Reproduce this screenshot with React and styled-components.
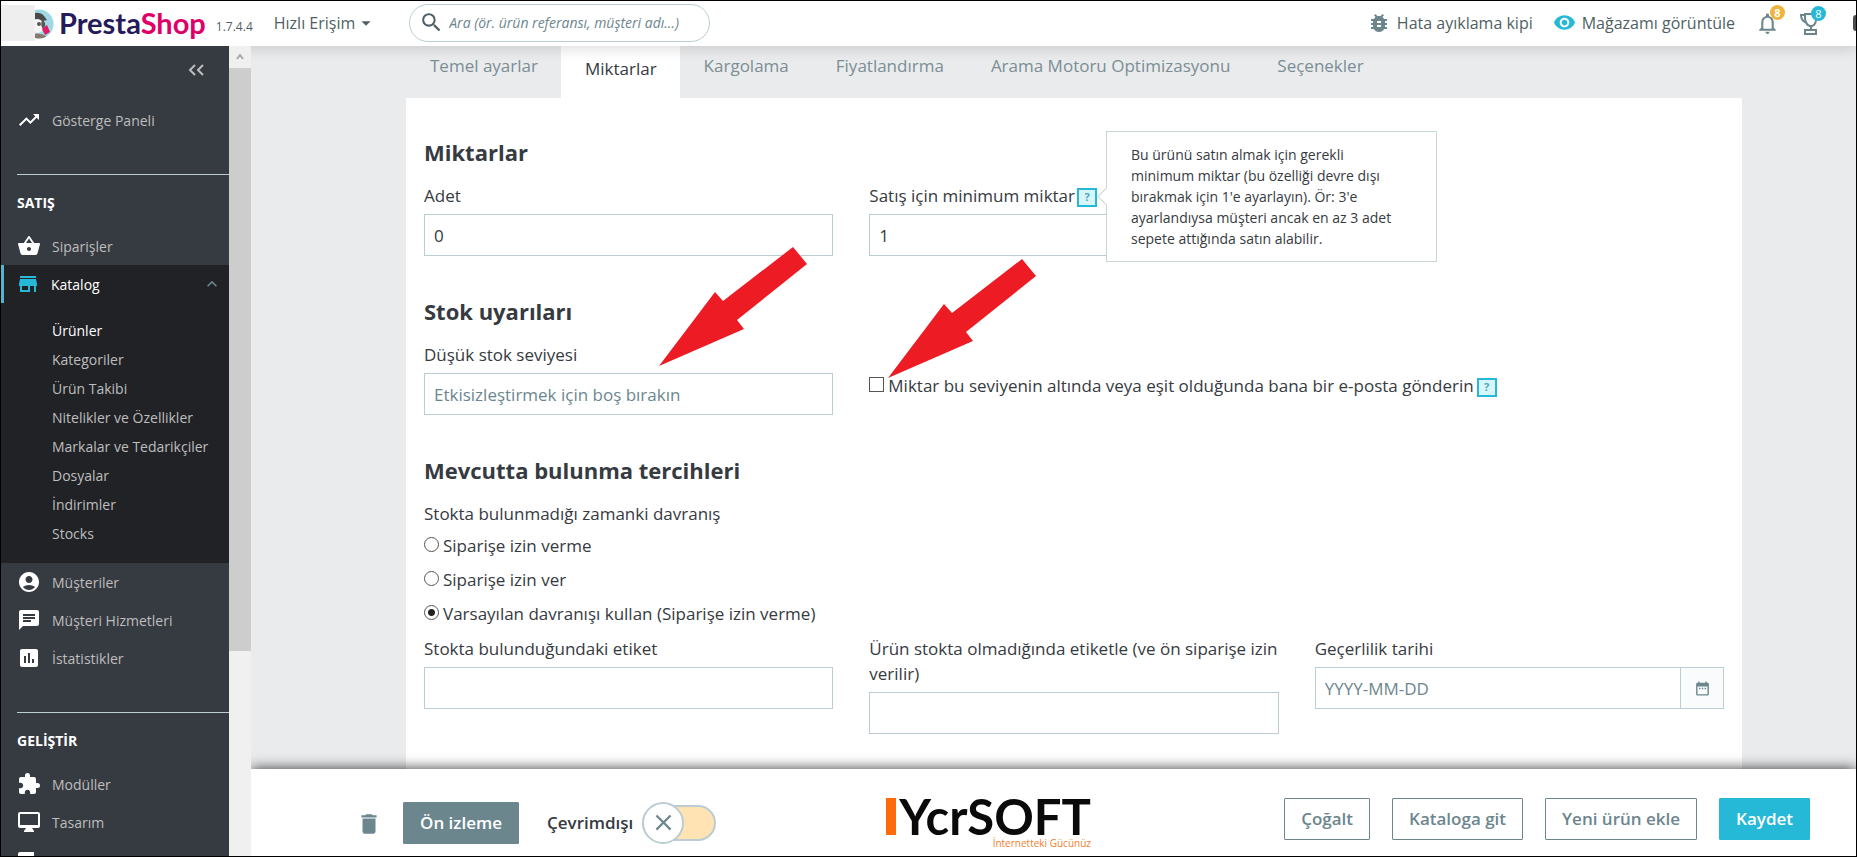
import React from "react";
import styled, { createGlobalStyle } from "styled-components";
import {
  MdTrendingUp,
  MdShoppingBasket,
  MdStore,
  MdAccountCircle,
  MdChat,
  MdAssessment,
  MdExtension,
  MdLocalShipping,
  MdKeyboardArrowUp,
  MdBugReport,
  MdRemoveRedEye,
  MdSearch,
  MdArrowDropDown,
  MdDelete,
  MdClose,
  MdNotificationsNone,
  MdDateRange,
} from "react-icons/md";

const GlobalStyle = createGlobalStyle`
  *, *::before, *::after { box-sizing: border-box; }
  body {
    margin: 0;
    background: #eaebec;
    color: #363a41;
    font-family: "Open Sans", "Noto Sans", sans-serif;
    font-size: 17px;
  }
  button, input { font: inherit; color: inherit; }
  button { cursor: pointer; }
  a { color: inherit; text-decoration: none; }
  svg { display: block; flex: none; }
`;

const Shell = styled.div`
  height: 100vh;
  display: flex;
  flex-direction: column;
  border: 1px solid #000;
  overflow: hidden;
`;

/* ---------- top bar ---------- */

const TopBar = styled.header`
  position: relative;
  z-index: 1;
  flex: none;
  display: flex;
  align-items: center;
  height: 45px;
  padding-bottom: 2px;
  background: #fff;
  color: #4f5f64;
  font-size: 16px;
  white-space: nowrap;
  box-shadow: 0 4px 12px rgba(0, 0, 0, 0.12);
`;

const Brand = styled.a`
  display: flex;
  align-items: center;
  height: 37px;
`;

const BrandName = styled.span`
  margin-left: 5px;
  font-family: "Lato", sans-serif;
  font-size: 29px;
  line-height: 36px;
  font-weight: 700;
  color: #251b5b;
  b { font-weight: 700; color: #df0067; }
`;

const Version = styled.span`
  margin: 8px 0 0 10px;
  font-size: 12px;
  line-height: 16px;
`;

const QuickAccess = styled.button`
  display: flex;
  align-items: center;
  margin-left: 21px;
  padding: 0;
  border: 0;
  background: none;
  line-height: 24px;
`;

const Search = styled.label`
  display: flex;
  align-items: center;
  width: 301px;
  height: 38px;
  margin-left: 32px;
  padding: 0 20px 0 9px;
  border: 1px solid #bbcdd2;
  border-radius: 19px;
  input {
    flex: 1;
    min-width: 0;
    margin-left: 5px;
    padding: 0;
    border: 0;
    outline: 0;
    background: none;
    font-size: 14px;
    font-style: italic;
  }
  input::placeholder { color: #6c868e; opacity: 1; }
`;

const TopActions = styled.div`
  display: flex;
  align-items: center;
  margin-left: auto;
`;

const TopLink = styled.a`
  display: flex;
  align-items: center;
  gap: 6px;
  margin-right: 20px;
  line-height: 24px;
`;

const Notify = styled.button`
  position: relative;
  display: flex;
  padding: 0;
  margin: 2px 19px 0 0;
  border: 0;
  background: none;
  color: #6c868e;
`;

const Badge = styled.span`
  position: absolute;
  top: -6px;
  right: -5px;
  width: 15px;
  height: 15px;
  border-radius: 50%;
  background: ${(p) => p.$color};
  color: #fff;
  font-size: 11px;
  line-height: 15px;
  font-weight: ${(p) => (p.$bold ? 700 : 400)};
  text-align: center;
`;

const Avatar = styled.div`
  width: 3px;
  height: 16px;
  margin-left: 13px;
  border-radius: 3px 0 0 3px;
  background: #4b4b4b;
`;

/* ---------- side navigation ---------- */

const Body = styled.div`
  flex: 1;
  min-height: 0;
  display: flex;
`;

const SideBar = styled.nav`
  position: relative;
  z-index: 2;
  flex: none;
  width: 228px;
  overflow: hidden;
  background: #363a41;
  color: #bebebe;
  font-size: 14px;
`;

const Collapse = styled.button`
  display: block;
  margin: 15px 24px 22px auto;
  padding: 0;
  border: 0;
  background: none;
  color: #bebebe;
`;

const SideGroup = styled.section`
  h3 {
    margin: 35px 0 14px 16px;
    padding-top: 18px;
    border-top: 1px solid #bbcdd2;
    color: #fff;
    font-size: 14px;
    line-height: 20px;
    font-weight: 700;
  }
  ul { margin: 0; padding: 0; list-style: none; }
`;

const SideItem = styled.a`
  display: flex;
  align-items: center;
  gap: 11px;
  height: 38px;
  padding: 0 7px 0 ${(p) => (p.$active ? 12 : 16)}px;
  border-left: ${(p) => (p.$active ? "3px solid #4fb6cf" : "0")};
  background: ${(p) => (p.$active ? "#202226" : "transparent")};
  color: ${(p) => (p.$active ? "#fff" : "inherit")};
  > svg:first-child { color: ${(p) => (p.$active ? "#25b9d7" : "#fff")}; }
  > svg:last-child:not(:first-child) { margin-left: auto; color: #6c868e; }
`;

const SubMenu = styled.div`
  padding: 13px 0 15px 51px;
  background: #202226;
`;

const SubItem = styled.a`
  display: block;
  line-height: 29px;
  color: ${(p) => (p.$active ? "#fff" : "inherit")};
`;

const ScrollTrack = styled.div`
  position: relative;
  z-index: 2;
  flex: none;
  width: 22px;
  background: #f0f0f0;
`;

const ScrollUp = styled.div`
  display: flex;
  justify-content: center;
  align-items: center;
  height: 22px;
  color: #a8a8a8;
`;

const ScrollThumb = styled.div`
  height: 72%;
  background: #cdcdcd;
`;

/* ---------- main area ---------- */

const Main = styled.main`
  flex: 1;
  min-width: 0;
  display: flex;
  flex-direction: column;
`;

const Scroll = styled.div`
  flex: 1;
  min-height: 0;
  display: flex;
  flex-direction: column;
  overflow: hidden;
  padding: 0 114px 0 155px;
  background: #eaebec;
`;

const Tabs = styled.div`
  flex: none;
  display: flex;
  height: 52px;
`;

const Tab = styled.button`
  padding: 0 23px ${(p) => (p.$active ? 8 : 14)}px 24px;
  border: 0;
  background: ${(p) => (p.$active ? "#fff" : "transparent")};
  color: ${(p) => (p.$active ? "#363a41" : "#7b8e94")};
  white-space: nowrap;
`;

const Card = styled.form`
  flex: 1;
  padding: 39px 18px 0;
  background: #fff;
`;

const Heading = styled.h2`
  margin: 0 0 16px;
  font-size: 22px;
  line-height: 30px;
  font-weight: 700;
`;

const Row = styled.div`
  display: grid;
  grid-template-columns: repeat(3, minmax(0, 1fr));
  column-gap: 36px;
  align-items: start;
  margin-bottom: 40px;
`;

const Field = styled.div`
  position: relative;
  grid-column: span ${(p) => p.$span || 1};
`;

const LabelRow = styled.div`
  display: flex;
  align-items: center;
  gap: 2px;
  margin-bottom: 6px;
  line-height: 25px;
`;

const TextInput = styled.input`
  display: block;
  width: 100%;
  height: 42px;
  padding: 0 9px;
  border: 1px solid #bbcdd2;
  border-radius: 0;
  outline: 0;
  background: #fff;
  &::placeholder { color: #6c868e; opacity: 1; }
`;

const DateGroup = styled.div`
  display: flex;
`;

const DateButton = styled.button`
  flex: none;
  display: flex;
  align-items: center;
  justify-content: center;
  width: 43px;
  height: 42px;
  padding: 0;
  border: 1px solid #bbcdd2;
  border-left: 0;
  background: #fafbfc;
  color: #6c868e;
`;

const HelpAnchor = styled.span`
  position: relative;
  display: inline-flex;
`;

const HelpButton = styled.button`
  flex: none;
  width: 20px;
  height: 19px;
  margin-top: 3px;
  padding: 0;
  border: 2px solid #25b9d7;
  background: #d8f5fa;
  color: #4ba7bd;
  font-size: 11px;
  line-height: 14px;
  font-weight: 700;
`;

const Popover = styled.div`
  position: absolute;
  z-index: 1;
  left: 29px;
  top: 50%;
  width: 331px;
  margin-top: -65px;
  padding: 12px 30px 12px 24px;
  border: 1px solid #c9d5d6;
  background: #fff;
  font-size: 14px;
  line-height: 21px;
  &::before {
    content: "";
    position: absolute;
    left: -7px;
    top: 58px;
    width: 13px;
    height: 13px;
    border: solid #c9d5d6;
    border-width: 0 0 1px 1px;
    background: #fff;
    transform: rotate(45deg);
  }
`;

const RadioList = styled.div`
  display: flex;
  flex-direction: column;
  align-items: flex-start;
  gap: 9px;
  margin: 7px 0 10px;
  line-height: 25px;
`;

const Choice = styled.label`
  display: flex;
  align-items: center;
  gap: 4px;
  line-height: 25px;
`;

const Tick = styled.input`
  appearance: none;
  flex: none;
  width: 15px;
  height: 15px;
  margin: 0 0 3px;
  border: 1px solid #555;
  border-radius: ${(p) => (p.type === "radio" ? "50%" : "0")};
  background: #fff;
  &:checked { background: radial-gradient(circle, #222 3px, #fff 4px); }
`;

const EmailRow = styled.div`
  display: flex;
  align-items: center;
  gap: 3px;
  margin-top: 31px;
`;

const Arrow = styled.svg`
  position: absolute;
  z-index: 2;
  left: ${(p) => p.$left}px;
  top: ${(p) => p.$top}px;
  pointer-events: none;
`;

/* ---------- footer ---------- */

const Footer = styled.footer`
  position: relative;
  z-index: 1;
  flex: none;
  display: flex;
  align-items: center;
  height: 87px;
  padding: 0 46px 0 105px;
  background: #fff;
  white-space: nowrap;
  box-shadow: 0 0 13px rgba(0, 0, 0, 0.8);
`;

const IconButton = styled.button`
  padding: 0;
  margin: 2px 21px 0 0;
  border: 0;
  background: none;
  color: #6c868e;
`;

const Button = styled.button`
  height: 42px;
  padding: 0 16px;
  border: 1px solid ${(p) => p.$border || "#6c868e"};
  border-radius: 1px;
  background: ${(p) => p.$fill || "#fff"};
  color: ${(p) => (p.$fill ? "#fff" : "#6c868e")};
  font-weight: 600;
`;

const FooterLeft = styled.div`
  display: flex;
  align-items: center;
  margin-top: 20px;
`;

const FooterRight = styled.div`
  display: flex;
  gap: 22px;
  margin: 12px 0 0 auto;
`;

const Toggle = styled.label`
  display: flex;
  align-items: center;
  gap: 9px;
  margin-left: 28px;
  font-weight: 600;
  input { position: absolute; opacity: 0; width: 0; height: 0; margin: 0; }
`;

const Switch = styled.span`
  display: flex;
  align-items: center;
  width: 74px;
  height: 36px;
  border: 2px solid #bbcdd2;
  border-radius: 18px;
  background: #ffe3b3;
  color: #6c868e;
`;

const Knob = styled.span`
  flex: none;
  display: flex;
  align-items: center;
  justify-content: center;
  width: 42px;
  height: 42px;
  margin-left: -2px;
  border: 2px solid #bbcdd2;
  border-radius: 50%;
  background: #fff;
`;

const Sponsor = styled.div`
  display: grid;
  grid-template-columns: 10px auto;
  column-gap: 3px;
  margin: 22px 0 0 170px;
  font-family: "Lato", sans-serif;
`;

const SponsorBar = styled.span`
  height: 37px;
  background: #ff6a0a;
`;

const SponsorName = styled.span`
  font-size: 49px;
  line-height: 37px;
  font-weight: 700;
  color: #0a0a0a;
`;

const SponsorTag = styled.span`
  grid-column: 1 / -1;
  justify-self: end;
  margin-top: 1px;
  font-family: "Open Sans", sans-serif;
  font-size: 10px;
  line-height: 14px;
  color: #f08030;
`;

function DesktopIcon({ size }) {
  return (
    <svg width={size} height={size} viewBox="0 0 24 24" fill="currentColor" aria-hidden="true">
      <path
        fillRule="evenodd"
        d="M3 2h18a2 2 0 0 1 2 2v12a2 2 0 0 1-2 2h-6l2 3v1H7v-1l2-3H3a2 2 0 0 1-2-2V4a2 2 0 0 1 2-2zM3 4v11h18V4z"
      />
    </svg>
  );
}

const mainNav = [
  { label: "Siparişler", Icon: MdShoppingBasket },
  {
    label: "Katalog",
    Icon: MdStore,
    items: [
      "Ürünler",
      "Kategoriler",
      "Ürün Takibi",
      "Nitelikler ve Özellikler",
      "Markalar ve Tedarikçiler",
      "Dosyalar",
      "İndirimler",
      "Stocks",
    ],
  },
  { label: "Müşteriler", Icon: MdAccountCircle },
  { label: "Müşteri Hizmetleri", Icon: MdChat },
  { label: "İstatistikler", Icon: MdAssessment },
];

const developNav = [
  { label: "Modüller", Icon: MdExtension },
  { label: "Tasarım", Icon: DesktopIcon },
  { label: "Kargo", Icon: MdLocalShipping },
];

const tabs = [
  "Temel ayarlar",
  "Miktarlar",
  "Kargolama",
  "Fiyatlandırma",
  "Arama Motoru Optimizasyonu",
  "Seçenekler",
];

const radios = [
  "Siparişe izin verme",
  "Siparişe izin ver",
  "Varsayılan davranışı kullan (Siparişe izin verme)",
];

function NavGroup({ title, entries }) {
  return (
    <SideGroup>
      <h3>{title}</h3>
      <ul>
        {entries.map(({ label, Icon, items }) => (
          <li key={label}>
            <SideItem href="#" $active={!!items}>
              <Icon size={24} />
              {label}
              {items && <MdKeyboardArrowUp size={20} />}
            </SideItem>
            {items && (
              <SubMenu>
                {items.map((item, i) => (
                  <SubItem key={item} href="#" $active={i === 0}>
                    {item}
                  </SubItem>
                ))}
              </SubMenu>
            )}
          </li>
        ))}
      </ul>
    </SideGroup>
  );
}

function RedArrow({ left, top }) {
  return (
    <Arrow $left={left} $top={top} width="148" height="119" viewBox="0 0 148 119" aria-hidden="true">
      <polygon points="0,119 56,45 64,54 134,0 148,17 78,73 85,82" fill="#ed1c24" />
    </Arrow>
  );
}

function Mascot() {
  return (
    <svg width="53" height="37" viewBox="0 0 53 37" aria-hidden="true">
      <clipPath id="face">
        <circle cx="38" cy="20" r="14.5" />
      </clipPath>
      <g clipPath="url(#face)">
        <rect x="20" y="2" width="34" height="36" fill="#9fd9e4" />
        <path d="M28 11q10-5 15 1l3 4-4 1-14-1z" fill="#4a4a4c" />
        <ellipse cx="36" cy="22" rx="7" ry="7" fill="#f4f4f2" />
        <path d="M41 16q4 2 3 6l-2 3q-3-4-1-9z" fill="#5a5350" />
        <circle cx="38" cy="20" r="2" fill="#555" />
        <path d="M41 25l5-4 3 7-5 3z" fill="#df1a68" />
        <path d="M28 32q9-5 17 0l-2 5H28z" fill="#8b7a6c" />
      </g>
      <rect y="1" width="34" height="36" fill="#eeeeee" />
    </svg>
  );
}

function Trophy() {
  return (
    <svg width="22" height="24" viewBox="0 0 22 24" fill="none" stroke="#6c868e" strokeWidth="2" aria-hidden="true">
      <path d="M6 2h11v5q0 6-4 7h-2q-4-1-5-7z" />
      <path d="M6 3H2q0 6 6 8M12 14v4" />
      <rect x="6" y="18" width="11" height="4" />
    </svg>
  );
}

export default function App() {
  return (
    <>
      <GlobalStyle />
      <Shell>
        <TopBar>
          <Brand href="#">
            <Mascot />
            <BrandName>
              Presta<b>Shop</b>
            </BrandName>
          </Brand>
          <Version>1.7.4.4</Version>
          <QuickAccess type="button">
            Hızlı Erişim <MdArrowDropDown size={22} />
          </QuickAccess>
          <Search>
            <MdSearch size={25} />
            <input type="text" aria-label="Ara" placeholder="Ara (ör. ürün referansı, müşteri adı…)" />
          </Search>
          <TopActions>
            <TopLink href="#">
              <MdBugReport size={24} color="#6c868e" />
              Hata ayıklama kipi
            </TopLink>
            <TopLink href="#">
              <MdRemoveRedEye size={23} color="#25b9d7" />
              Mağazamı görüntüle
            </TopLink>
            <Notify type="button" aria-label="Bildirimler">
              <MdNotificationsNone size={25} />
              <Badge $color="#f0b43c" $bold>8</Badge>
            </Notify>
            <Notify type="button" aria-label="Başarılar">
              <Trophy />
              <Badge $color="#25b9d7">8</Badge>
            </Notify>
            <Avatar />
          </TopActions>
        </TopBar>

        <Body>
          <SideBar>
            <Collapse type="button" aria-label="Menüyü daralt">
              <svg width="18" height="18" viewBox="0 0 18 18" fill="none" stroke="currentColor" strokeWidth="2" aria-hidden="true">
                <path d="M8 4L3 9l5 5M16 4l-5 5 5 5" />
              </svg>
            </Collapse>
            <SideItem href="#">
              <MdTrendingUp size={24} />
              Gösterge Paneli
            </SideItem>
            <NavGroup title="SATIŞ" entries={mainNav} />
            <NavGroup title="GELİŞTİR" entries={developNav} />
          </SideBar>
          <ScrollTrack>
            <ScrollUp>
              <svg width="8" height="6" viewBox="0 0 8 6" fill="none" stroke="currentColor" strokeWidth="2" aria-hidden="true">
                <path d="M1 5l3-4 3 4" />
              </svg>
            </ScrollUp>
            <ScrollThumb />
          </ScrollTrack>

          <Main>
            <Scroll>
              <Tabs role="tablist">
                {tabs.map((name) => (
                  <Tab key={name} type="button" role="tab" $active={name === "Miktarlar"}>
                    {name}
                  </Tab>
                ))}
              </Tabs>
              <Card>
                <Heading>Miktarlar</Heading>
                <Row>
                  <Field>
                    <LabelRow>
                      <label htmlFor="qty">Adet</label>
                    </LabelRow>
                    <TextInput id="qty" type="text" defaultValue="0" />
                  </Field>
                  <Field>
                    <LabelRow>
                      <label htmlFor="min">Satış için minimum miktar</label>
                      <HelpAnchor>
                        <HelpButton type="button">?</HelpButton>
                        <Popover role="tooltip">
                          Bu ürünü satın almak için gerekli minimum miktar (bu özelliği devre dışı bırakmak için 1'e
                          ayarlayın). Ör: 3'e ayarlandıysa müşteri ancak en az 3 adet sepete attığında satın alabilir.
                        </Popover>
                      </HelpAnchor>
                    </LabelRow>
                    <TextInput id="min" type="text" defaultValue="1" />
                  </Field>
                </Row>

                <Heading>Stok uyarıları</Heading>
                <Row>
                  <Field>
                    <LabelRow>
                      <label htmlFor="low">Düşük stok seviyesi</label>
                    </LabelRow>
                    <TextInput id="low" type="text" placeholder="Etkisizleştirmek için boş bırakın" />
                    <RedArrow left={235} top={-95} />
                  </Field>
                  <Field $span={2}>
                    <EmailRow>
                      <Choice>
                        <Tick type="checkbox" />
                        Miktar bu seviyenin altında veya eşit olduğunda bana bir e-posta gönderin
                      </Choice>
                      <HelpButton type="button">?</HelpButton>
                    </EmailRow>
                    <RedArrow left={19} top={-83} />
                  </Field>
                </Row>

                <Heading>Mevcutta bulunma tercihleri</Heading>
                <Choice as="div" id="behaviour">Stokta bulunmadığı zamanki davranış</Choice>
                <RadioList role="radiogroup" aria-labelledby="behaviour">
                  {radios.map((name, i) => (
                    <Choice key={name}>
                      <Tick type="radio" name="behaviour" defaultChecked={i === 2} />
                      {name}
                    </Choice>
                  ))}
                </RadioList>
                <Row>
                  <Field>
                    <LabelRow>
                      <label htmlFor="in">Stokta bulunduğundaki etiket</label>
                    </LabelRow>
                    <TextInput id="in" type="text" />
                  </Field>
                  <Field>
                    <LabelRow>
                      <label htmlFor="out">Ürün stokta olmadığında etiketle (ve ön siparişe izin verilir)</label>
                    </LabelRow>
                    <TextInput id="out" type="text" />
                  </Field>
                  <Field>
                    <LabelRow>
                      <label htmlFor="date">Geçerlilik tarihi</label>
                    </LabelRow>
                    <DateGroup>
                      <TextInput id="date" type="text" placeholder="YYYY-MM-DD" />
                      <DateButton type="button" aria-label="Takvim">
                        <MdDateRange size={17} />
                      </DateButton>
                    </DateGroup>
                  </Field>
                </Row>
              </Card>
            </Scroll>

            <Footer>
              <FooterLeft>
                <IconButton type="button" aria-label="Sil">
                  <MdDelete size={26} />
                </IconButton>
                <Button type="button" $fill="#6c868e">
                  Ön izleme
                </Button>
                <Toggle>
                  Çevrimdışı
                  <input type="checkbox" />
                  <Switch>
                    <Knob>
                      <MdClose size={27} />
                    </Knob>
                  </Switch>
                </Toggle>
              </FooterLeft>
              <Sponsor>
                <SponsorBar />
                <SponsorName>YcrSOFT</SponsorName>
                <SponsorTag>İnternetteki Gücünüz</SponsorTag>
              </Sponsor>
              <FooterRight>
                <Button type="button">Çoğalt</Button>
                <Button type="button">Kataloga git</Button>
                <Button type="button">Yeni ürün ekle</Button>
                <Button type="button" $fill="#25b9d7" $border="#25b9d7">
                  Kaydet
                </Button>
              </FooterRight>
            </Footer>
          </Main>
        </Body>
      </Shell>
    </>
  );
}
